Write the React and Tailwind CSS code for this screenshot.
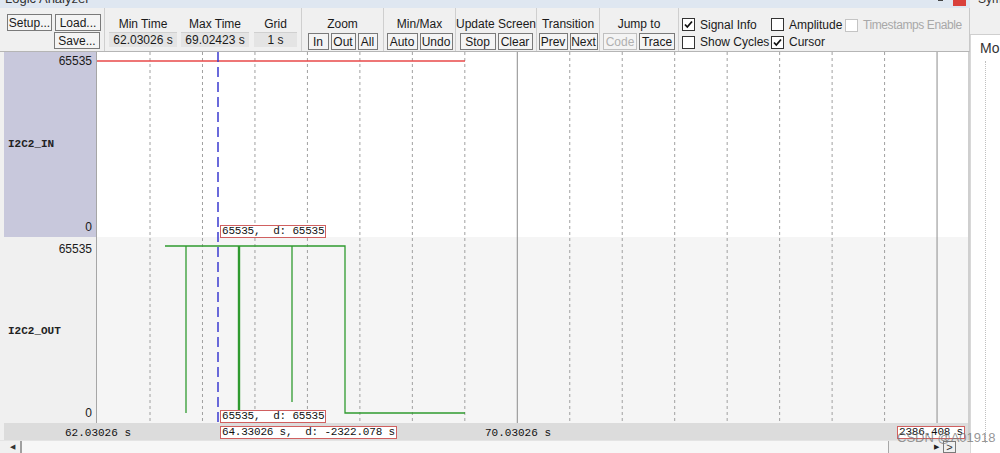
import React from "react";

const GRID = Array.from({ length: 16 }, (_, i) => 53 + i * 52.47);
const SOLID = [7, 15];

const Btn = ({ children, w, disabled }) => (
  <div
    className={`h-[17px] flex items-center justify-center border border-[#7a7a7a] bg-[#f4f4f4] text-[12px] leading-none ${
      disabled ? "text-[#b0b0b0] border-[#c0c0c0]" : "text-[#1a1a1a]"
    }`}
    style={{ width: w }}
  >
    {children}
  </div>
);

const ValueBox = ({ children, w }) => (
  <div
    className="h-[15px] flex items-center justify-center bg-[#e4e4e4] border-t border-[#d0d0d0] text-[12px] leading-none text-[#1a1a1a]"
    style={{ width: w }}
  >
    {children}
  </div>
);

const Check = ({ checked, disabled, label }) => (
  <div className="flex items-center gap-[5px] h-[18px] whitespace-nowrap">
    <div
      className={`w-[13px] h-[13px] shrink-0 bg-white border flex items-center justify-center ${
        disabled ? "border-[#c4c4c4]" : "border-[#333]"
      }`}
    >
      {checked && (
        <svg width="11" height="11" viewBox="0 0 11 11">
          <path d="M2 5.5 L4.3 8 L9 2.5" fill="none" stroke="#111" strokeWidth="1.8" />
        </svg>
      )}
    </div>
    <span
      className={`text-[12px] leading-none ${
        disabled ? "text-[#a8a8a8] tracking-[-0.4px]" : "text-[#1a1a1a]"
      }`}
    >
      {label}
    </span>
  </div>
);

const Group = ({ label, w, children }) => (
  <div className="flex flex-col items-center border-r border-[#cfcfcf] pt-[8px]" style={{ width: w }}>
    <div className="h-[16px] text-[12px] leading-[16px] text-[#1a1a1a] whitespace-nowrap">{label}</div>
    <div className="flex gap-[2px] mt-[1px]">{children}</div>
  </div>
);

const Toolbar = () => (
  <div className="h-[44px] flex bg-[#f0f0f0] border-b border-[#b5b5b5] border-r border-r-[#c8c8c8]">
    <div className="w-[105px] border-r border-[#cfcfcf] pl-[7px] pt-[6px] flex flex-col gap-[1px]">
      <div className="flex gap-[3px]">
        <Btn w={45}>Setup...</Btn>
        <Btn w={46}>Load...</Btn>
      </div>
      <div className="flex justify-end pr-[4px]">
        <Btn w={46}>Save...</Btn>
      </div>
    </div>
    <div className="w-[197px] border-r border-[#cfcfcf] flex pl-[4px] gap-[4px] pt-[8px]">
      <div className="flex flex-col items-center">
        <div className="h-[16px] text-[12px] leading-[16px]">Min Time</div>
        <ValueBox w={68}>62.03026 s</ValueBox>
      </div>
      <div className="flex flex-col items-center">
        <div className="h-[16px] text-[12px] leading-[16px]">Max Time</div>
        <ValueBox w={68}>69.02423 s</ValueBox>
      </div>
      <div className="flex flex-col items-center ml-[1px]">
        <div className="h-[16px] text-[12px] leading-[16px]">Grid</div>
        <ValueBox w={43}>1 s</ValueBox>
      </div>
    </div>
    <Group label="Zoom" w={82}>
      <Btn w={21}>In</Btn>
      <Btn w={25}>Out</Btn>
      <Btn w={20}>All</Btn>
    </Group>
    <Group label="Min/Max" w={72}>
      <Btn w={31}>Auto</Btn>
      <Btn w={33}>Undo</Btn>
    </Group>
    <Group label="Update Screen" w={81}>
      <Btn w={36}>Stop</Btn>
      <Btn w={35}>Clear</Btn>
    </Group>
    <Group label="Transition" w={63}>
      <Btn w={29}>Prev</Btn>
      <Btn w={28}>Next</Btn>
    </Group>
    <Group label="Jump to" w={79}>
      <Btn w={34} disabled>
        Code
      </Btn>
      <Btn w={36}>Trace</Btn>
    </Group>
    <div className="flex-1 min-w-0 pl-[3px] pt-[8px] flex overflow-hidden">
      <div className="flex flex-col w-[89px] shrink-0">
        <Check checked label="Signal Info" />
        <Check label="Show Cycles" />
      </div>
      <div className="flex flex-col w-[74px] shrink-0">
        <Check label="Amplitude" />
        <Check checked label="Cursor" />
      </div>
      <div className="flex flex-col shrink-0">
        <Check disabled label="Timestamps Enable" />
      </div>
    </div>
  </div>
);

const ValueTag = ({ children, className }) => (
  <div
    className={`absolute h-[13px] px-[1px] bg-white border border-[#d06060] font-['Liberation_Mono',monospace] text-[11px] leading-[11px] tracking-[-0.2px] text-[#111] whitespace-pre ${className}`}
  >
    {children}
  </div>
);

const Plot = () => (
  <div className="absolute inset-0 pointer-events-none">
    <svg width="871" height="371" className="absolute left-0 top-0">
      {GRID.map((x, i) =>
        SOLID.includes(i) ? (
          <line key={i} x1={x} y1="0" x2={x} y2="371" stroke="#8c8c8c" strokeWidth="1" />
        ) : (
          <line key={i} x1={x} y1="0" x2={x} y2="371" stroke="#a0a0a0" strokeWidth="1" strokeDasharray="3 3" />
        )
      )}
      <line x1="0" y1="9" x2="368" y2="9" stroke="#e84848" strokeWidth="1.3" />
      <g stroke="#2f9a2f" fill="none">
        <path d="M68 194 H248 V361 H368" strokeWidth="1.3" />
        <line x1="89" y1="194" x2="89" y2="361" strokeWidth="1.3" />
        <line x1="142" y1="194" x2="142" y2="371" strokeWidth="2.4" />
        <line x1="195" y1="194" x2="195" y2="350" strokeWidth="1.3" />
      </g>
      <line x1="121" y1="0" x2="121" y2="371" stroke="#3a3ad0" strokeWidth="1.5" strokeDasharray="10 5" />
    </svg>
    <ValueTag className="left-[123px] top-[173px]">65535,  d: 65535</ValueTag>
    <ValueTag className="left-[123px] top-[358px]">65535,  d: 65535</ValueTag>
  </div>
);

const LabelRow = ({ name, bg, plotBg, h, top }) => (
  <div className="flex" style={{ height: h }}>
    <div
      className={`w-[93px] ${bg} border-r border-[#a6a6a6] relative flex flex-col justify-between pb-[3px] pr-[4px]`}
      style={{ paddingTop: top }}
    >
      <div className="text-right text-[12px] leading-[13px] text-[#1a1a1a]">65535</div>
      <div className="font-['Liberation_Mono',monospace] font-bold text-[11px] leading-[13px] text-[#222] pl-[4px]">
        {name}
      </div>
      <div className="text-right text-[12px] leading-[13px] text-[#1a1a1a]">0</div>
    </div>
    <div className={`flex-1 ${plotBg}`} />
  </div>
);

export default function App() {
  return (
    <div className="w-[1000px] h-[453px] flex bg-[#f0f0f0] overflow-hidden font-['Liberation_Sans',Arial,sans-serif] text-[#1a1a1a]">
      <div className="w-[970px] flex flex-col">
        <div className="h-[8px] bg-[#dfe7f1] relative overflow-hidden">
          <div className="absolute left-[5px] top-[-8px] text-[13px] leading-[14px] text-[#333]">Logic Analyzer</div>
          <div className="absolute left-[938px] top-[0px] w-[5px] h-[1px] bg-[#444]" />
          <div className="absolute left-[953px] top-0 w-[13px] h-[6px] bg-[#d9413c]" />
        </div>
        <Toolbar />
        <div className="flex-1 relative pl-[4px] border-r-2 border-[#cfcfcf]">
          <LabelRow name="I2C2_IN" bg="bg-[#c8c8dc]" plotBg="bg-white" h={185} top={3} />
          <LabelRow name="I2C2_OUT" bg="bg-[#f0f0f0]" plotBg="bg-[#f5f5f5]" h={186} top={6} />
          <div className="absolute left-[97px] top-0 right-0 h-[371px]">
            <Plot />
          </div>
        </div>
        <div className="h-[17px] bg-[#dcdcdc] relative font-['Liberation_Mono',monospace] text-[11px] text-[#111] ml-[4px] border-r-2 border-[#cfcfcf]">
          <span className="absolute left-[61px] top-[2px]">62.03026 s</span>
          <span className="absolute left-[481px] top-[2px]">70.03026 s</span>
          <ValueTag className="left-[216px] top-[3px]">64.33026 s,  d: -2322.078 s</ValueTag>
          <ValueTag className="left-[893px] top-[3px]">2386.408 s</ValueTag>
        </div>
        <div className="h-[13px] flex items-stretch bg-[#f0f0f0] border-t border-[#e4e4e4]">
          <div className="w-[18px] ml-[4px] flex items-center justify-center border-r-2 border-[#a0a0a0] text-[7px] text-[#333]">◀</div>
          <div className="flex-1 bg-[#f7f7f7]" />
          <div className="w-[55px] border-l border-[#a8a8a8] flex items-center justify-end pr-[4px] text-[7px] text-[#222]">▶</div>
          <div className="w-[13px] border border-[#7a7a7a] flex items-center justify-center text-[11px] leading-none text-[#333]">&gt;</div>
          <div className="w-[14px]" />
        </div>
      </div>
      <div className="flex-1 flex flex-col">
        <div className="h-[35px] bg-[#f0f0f0] border-b border-[#cfcfcf] relative overflow-hidden pl-[8px]">
          <div className="absolute left-[8px] top-[-8px] text-[12px] leading-[14px] text-[#333]">Sym</div>
        </div>
        <div className="flex-1 bg-white border-l border-[#d8d8d8] pl-[9px] pt-[5px] relative">
          <div className="text-[14px] leading-[16px] text-[#333]">Mo</div>
          <div className="absolute left-[14px] top-[26px] bottom-[10px] border-l border-dotted border-[#c0c0c0]" />
        </div>
      </div>
      <div className="absolute left-[897px] top-[431px] text-[13px] leading-[14px] text-[#7a7a7a]/80 font-['Liberation_Sans',Arial,sans-serif] pointer-events-none">
        CSDN @A01918
      </div>
    </div>
  );
}
